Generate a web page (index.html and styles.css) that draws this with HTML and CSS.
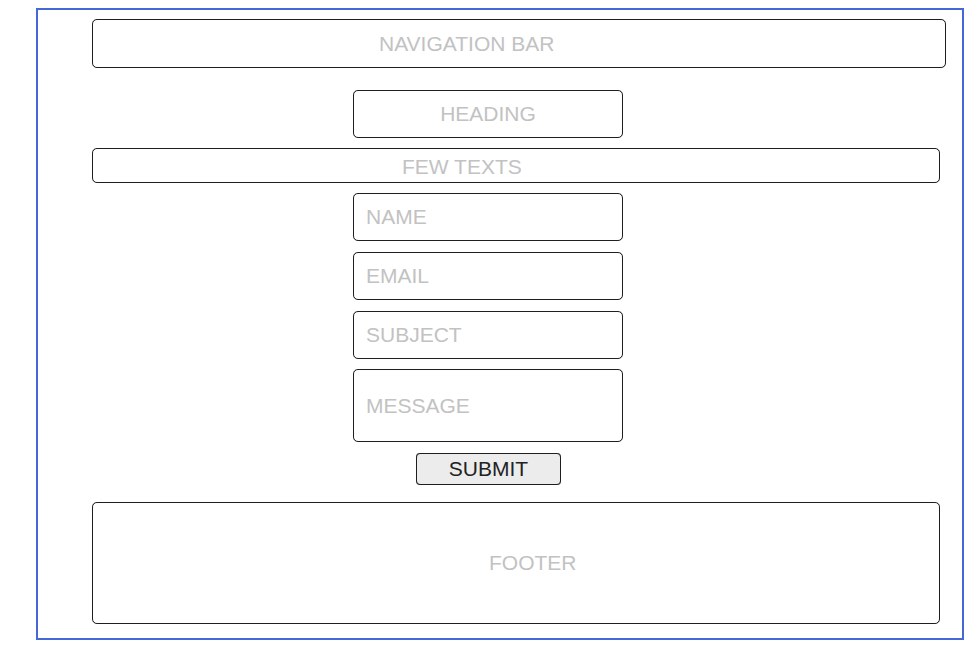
FILE: index.html
```html
<!DOCTYPE html>
<html lang="en">
<head>
  <meta charset="UTF-8">
  <meta name="viewport" content="width=device-width, initial-scale=1.0">
  <title>Contact Page Wireframe</title>
  <link rel="stylesheet" href="styles.css">
</head>
<body>
  <div class="frame">
    <!-- Top -->
    <div class="box nav">NAVIGATION BAR</div>
    <div class="box heading">HEADING</div>
    <div class="box few-texts">FEW TEXTS</div>

    <!-- Contact Form -->
    <div class="box field">NAME</div>
    <div class="box field">EMAIL</div>
    <div class="box field">SUBJECT</div>
    <div class="box field message">MESSAGE</div>
    <div class="box submit">SUBMIT</div>

    <!-- Bottom -->
    <div class="box footer">FOOTER</div>
  </div>
</body>
</html>
```

FILE: styles.css
```css
/* General Styling */
body {
  background-color: white;
  font-family: "Liberation Sans", Arial, sans-serif;
  margin: 0;
  padding: 0;
}

.frame {
  box-sizing: border-box;
  width: 928px;
  height: 632px;
  margin: 8px 0 0 36px;
  padding: 9px 0 0 54px;
  border: 2px solid #4568d8;
  display: flex;
  flex-direction: column;
  align-items: flex-start;
}

.box {
  box-sizing: border-box;
  border: 1px solid #1e1e1e;
  border-radius: 5px;
  box-shadow: 0 0 0.6px #444;
  font-size: 21px;
  color: #c2c2c2;
  display: flex;
  align-items: center;
}

/* Top */
.nav {
  width: 854px;
  height: 49px;
  padding-left: 286px;
  margin-bottom: 22px;
}

.heading {
  width: 270px;
  height: 48px;
  margin-left: 261px;
  margin-bottom: 10px;
  justify-content: center;
}

.few-texts {
  width: 848px;
  height: 35px;
  padding: 3px 0 0 309px;
  margin-bottom: 10px;
}

/* Contact Form */
.field {
  width: 270px;
  height: 48px;
  margin-left: 261px;
  margin-bottom: 11px;
  padding-left: 12px;
}

.field:nth-of-type(6) {
  margin-bottom: 10px;
}

.message {
  height: 73px;
}

.submit {
  width: 145px;
  height: 32px;
  margin-left: 324px;
  margin-bottom: 17px;
  justify-content: center;
  background-color: #ececec;
  color: #222;
  border-radius: 4px;
}

/* Bottom */
.footer {
  width: 848px;
  height: 122px;
  padding-left: 396px;
}
```
